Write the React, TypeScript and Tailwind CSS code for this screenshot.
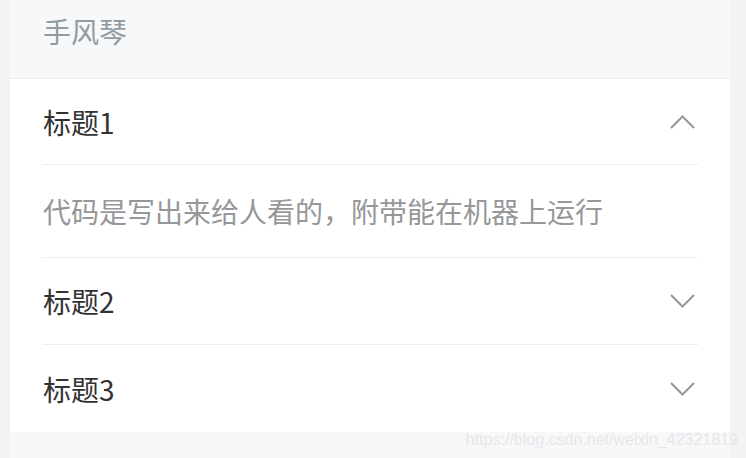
const items = [
  { title: '标题1', open: true, content: '代码是写出来给人看的，附带能在机器上运行' },
  { title: '标题2', open: false },
  { title: '标题3', open: false },
]

function Chevron({ up }: { up: boolean }) {
  return (
    <svg width="28" height="28" viewBox="0 0 28 28" fill="none" stroke="#969799" strokeWidth="2">
      {up ? <path d="M1 20 L12.5 8.5 L24 20" /> : <path d="M1 8 L12.5 19.5 L24 8" />}
    </svg>
  )
}

export default function App() {
  return (
    <div
      className="relative flex h-[458px] w-[746px] overflow-hidden bg-[#f2f3f5]"
      style={{ fontFamily: '"Noto Sans CJK SC", "Noto Sans", sans-serif' }}
    >
      <div className="ml-[10px] flex w-[720px] flex-col bg-[#f7f8fa]">
        <div className="h-[79px] border-b border-[#ebedf0] pl-[33px] pt-[17px] text-[28px] leading-[28px] text-[#8f9ba1]">
          手风琴
        </div>
        <div className="bg-white px-[32px]">
          {items.map((it, i) => (
            <div key={it.title} className={i > 0 ? 'border-t border-[#ebedf0]' : ''}>
              <div
                className={`flex items-center justify-between pl-[1px] ${i === 0 ? 'h-[85px]' : i === 1 ? 'h-[86px]' : 'h-[87px]'}`}
              >
                <span className="text-[28px] leading-[28px] text-[#323233]">{it.title}</span>
                <Chevron up={it.open} />
              </div>
              {it.open && (
                <div className="flex h-[93px] items-center border-t border-[#ebedf0] pl-[1px] text-[28px] leading-[28px] text-[#969799]">
                  {it.content}
                </div>
              )}
            </div>
          ))}
        </div>
      </div>
      <div
        className="absolute right-[8px] top-[430px] text-[16px] leading-[20px] text-[#e6e7e9]"
        style={{ fontFamily: '"Liberation Sans", Arial, sans-serif' }}
      >
        https://blog.csdn.net/weixin_42321819
      </div>
    </div>
  )
}
